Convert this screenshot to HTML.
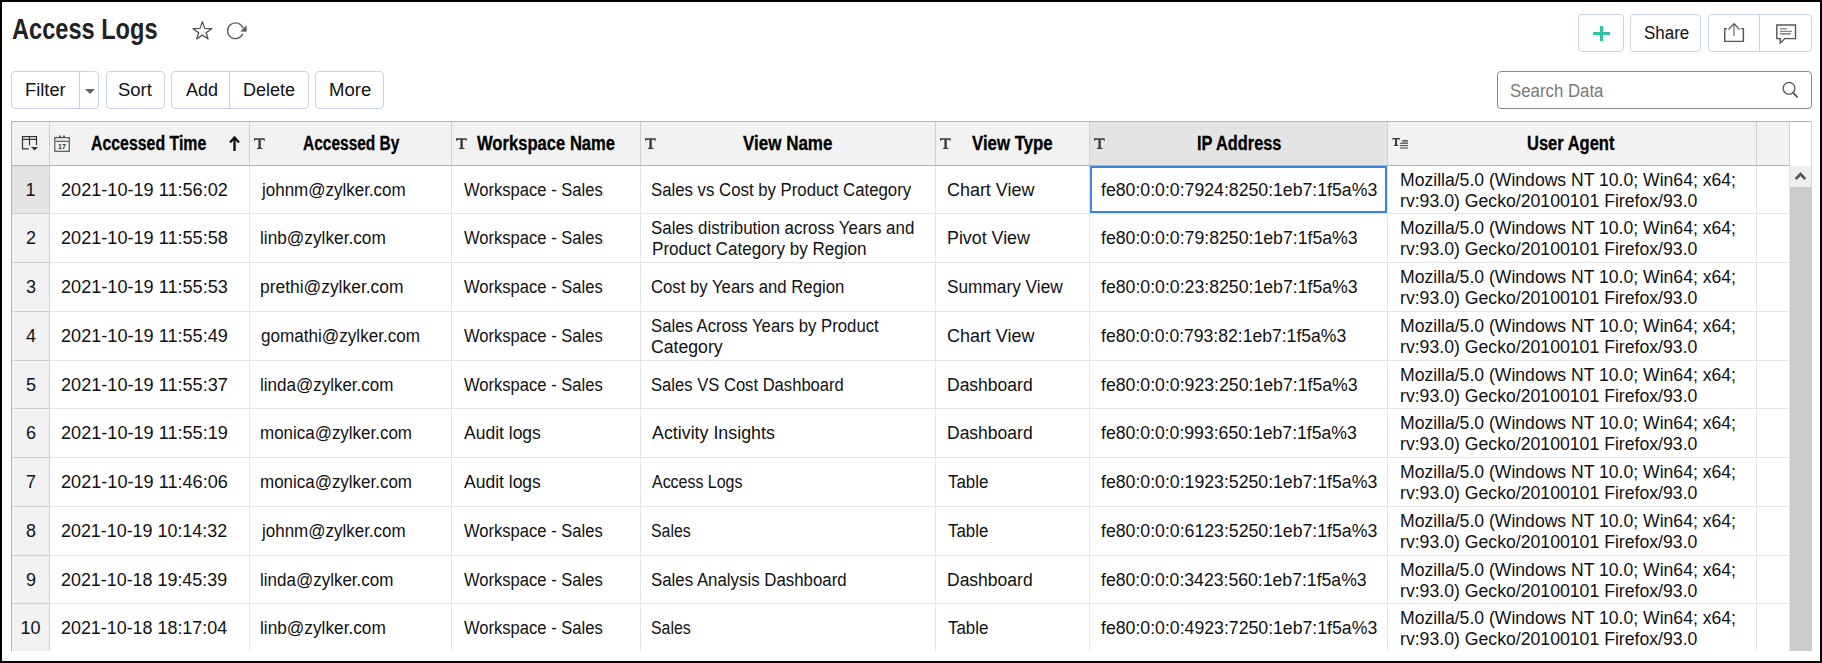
<!DOCTYPE html>
<html><head><meta charset="utf-8"><style>
*{margin:0;padding:0;box-sizing:border-box}
html,body{width:1822px;height:663px;overflow:hidden;background:#fff}
body{position:relative;font-family:"Liberation Sans",sans-serif;color:#111}
.t{position:absolute;white-space:nowrap;line-height:1;transform-origin:0 0}
.r{position:absolute}
.frame{position:absolute;left:0;top:0;width:1822px;height:663px;border:2px solid #000;z-index:50}
.btn{position:absolute;border:1px solid #c8d2ea;border-radius:4px;background:#fff}
</style></head><body>
<div id="t0" class="t" style="left:11.78px;top:13.80px;font-size:30px;transform:scaleX(0.7864);font-weight:700;color:#222;">Access Logs</div>
<svg class="r" style="left:185px;top:14px" width="36" height="32" viewBox="185 14 36 32">
<path d="M202.4 21.7 L204.7 28.4 L211.8 28.6 L206.1 32.7 L208.1 39 L202.4 35.1 L196.7 39 L198.7 32.7 L193 28.6 L200.1 28.4 Z" fill="none" stroke="#555" stroke-width="1.3" stroke-linejoin="round"/>
</svg>
<svg class="r" style="left:222px;top:14px" width="30" height="32" viewBox="222 14 30 32">
<path d="M242.8 33.85 A7.9 7.9 0 1 1 243 28.2" fill="none" stroke="#555" stroke-width="1.3"/>
<path d="M240.3 31.6 L246.6 25.4 L246.6 31.8 Z" fill="#555"/>
</svg>
<div class="btn" style="left:1578px;top:14px;width:46px;height:38px"></div>
<div class="r" style="left:1593px;top:32px;width:17px;height:3px;background:#2cc4a5"></div>
<div class="r" style="left:1600px;top:26px;width:3px;height:15px;background:#2cc4a5"></div>
<div class="btn" style="left:1630px;top:14px;width:71px;height:38px"></div>
<div id="t1" class="t" style="left:1643.63px;top:23.76px;font-size:18px;transform:scaleX(0.9410);">Share</div>
<div class="btn" style="left:1708px;top:14px;width:104px;height:38px"></div>
<div class="r" style="left:1759px;top:15px;width:1px;height:36px;background:#c8d2ea"></div>
<svg class="r" style="left:1715px;top:18px" width="90" height="30" viewBox="1715 18 90 30">
<path d="M1727 28.6 H1724.8 V41.4 H1743.4 V28.6 H1741.1" fill="none" stroke="#555" stroke-width="1.4"/>
<path d="M1734 36 V24" fill="none" stroke="#777" stroke-width="1.3"/>
<path d="M1728.4 29.6 L1734 23.7 L1739.6 29.6" fill="none" stroke="#555" stroke-width="1.3"/>
<path d="M1776.8 25 H1795.5 V38.6 H1784.8 L1780.3 43 V38.6 H1776.8 Z" fill="none" stroke="#555" stroke-width="1.4" stroke-linejoin="miter"/>
<path d="M1780 28.8 H1787 M1780 31.3 H1792 M1780 33.9 H1791" fill="none" stroke="#666" stroke-width="1.1"/>
</svg>
<div class="btn" style="left:11px;top:71px;width:88px;height:38px"></div>
<div class="r" style="left:79px;top:72px;width:1px;height:36px;background:#c8d2ea"></div>
<div id="t2" class="t" style="left:25.01px;top:81.16px;font-size:18px;transform:scaleX(1.0160);">Filter</div>
<svg class="r" style="left:84px;top:88px" width="12" height="7" viewBox="84 88 12 7"><path d="M85 89 H95 L90 94 Z" fill="#666"/></svg>
<div class="btn" style="left:106px;top:71px;width:59px;height:38px"></div>
<div id="t3" class="t" style="left:117.72px;top:81.16px;font-size:18px;transform:scaleX(1.0259);">Sort</div>
<div class="btn" style="left:171px;top:71px;width:138px;height:38px"></div>
<div class="r" style="left:229px;top:72px;width:1px;height:36px;background:#c8d2ea"></div>
<div id="t4" class="t" style="left:185.50px;top:81.16px;font-size:18px;transform:scaleX(1.0010);">Add</div>
<div id="t5" class="t" style="left:243.00px;top:81.16px;font-size:18px;">Delete</div>
<div class="btn" style="left:315px;top:71px;width:69px;height:38px"></div>
<div id="t6" class="t" style="left:328.50px;top:81.16px;font-size:18px;transform:scaleX(1.0303);">More</div>
<div class="r" style="left:1497px;top:71px;width:315px;height:38px;border:1px solid #8a8a8a;border-radius:4px"></div>
<div id="t7" class="t" style="left:1510.00px;top:82.16px;font-size:18px;transform:scaleX(0.9334);color:#7a7a7a;">Search Data</div>
<svg class="r" style="left:1778px;top:78px" width="24" height="24" viewBox="1778 78 24 24">
<circle cx="1789" cy="88.3" r="5.9" fill="none" stroke="#555" stroke-width="1.3"/>
<path d="M1793.3 92.8 L1797.6 97.3" stroke="#555" stroke-width="1.8"/>
</svg>
<div class="r" style="left:11px;top:121px;width:1779px;height:45px;background:#f2f2f2"></div>
<div class="r" style="left:1090px;top:122px;width:297px;height:43px;background:#e4e4e4"></div>
<div class="r" style="left:11px;top:166px;width:38px;height:485px;background:#f2f2f2"></div>
<div class="r" style="left:12px;top:166px;width:37px;height:47px;background:#e4e4e4"></div>
<div class="r" style="left:11px;top:121px;width:1801px;height:1px;background:#b4b4b4"></div>
<div class="r" style="left:11px;top:121px;width:1px;height:530px;background:#b4b4b4"></div>
<div class="r" style="left:11px;top:165px;width:1779px;height:1px;background:#b4b4b4"></div>
<div class="r" style="left:1811px;top:121px;width:1px;height:66px;background:#d8d8d8"></div>
<div class="r" style="left:49px;top:122px;width:1px;height:43px;background:#d0d0d0"></div>
<div class="r" style="left:249px;top:122px;width:1px;height:43px;background:#d0d0d0"></div>
<div class="r" style="left:451px;top:122px;width:1px;height:43px;background:#d0d0d0"></div>
<div class="r" style="left:640px;top:122px;width:1px;height:43px;background:#d0d0d0"></div>
<div class="r" style="left:935px;top:122px;width:1px;height:43px;background:#d0d0d0"></div>
<div class="r" style="left:1089px;top:122px;width:1px;height:43px;background:#d0d0d0"></div>
<div class="r" style="left:1387px;top:122px;width:1px;height:43px;background:#d0d0d0"></div>
<div class="r" style="left:1756px;top:122px;width:1px;height:43px;background:#d0d0d0"></div>
<div class="r" style="left:1789px;top:122px;width:1px;height:43px;background:#d0d0d0"></div>
<div class="r" style="left:49px;top:166px;width:1px;height:485px;background:#cfcfcf"></div>
<div class="r" style="left:249px;top:166px;width:1px;height:485px;background:#e5e5e5"></div>
<div class="r" style="left:451px;top:166px;width:1px;height:485px;background:#e5e5e5"></div>
<div class="r" style="left:640px;top:166px;width:1px;height:485px;background:#e5e5e5"></div>
<div class="r" style="left:935px;top:166px;width:1px;height:485px;background:#e5e5e5"></div>
<div class="r" style="left:1089px;top:166px;width:1px;height:485px;background:#e5e5e5"></div>
<div class="r" style="left:1387px;top:166px;width:1px;height:485px;background:#e5e5e5"></div>
<div class="r" style="left:1756px;top:166px;width:1px;height:485px;background:#e5e5e5"></div>
<div class="r" style="left:1789px;top:166px;width:1px;height:485px;background:#e5e5e5"></div>
<div class="r" style="left:12px;top:213px;width:37px;height:1px;background:#cfcfcf"></div>
<div class="r" style="left:50px;top:213px;width:1739px;height:1px;background:#e5e5e5"></div>
<div class="r" style="left:12px;top:262px;width:37px;height:1px;background:#cfcfcf"></div>
<div class="r" style="left:50px;top:262px;width:1739px;height:1px;background:#e5e5e5"></div>
<div class="r" style="left:12px;top:311px;width:37px;height:1px;background:#cfcfcf"></div>
<div class="r" style="left:50px;top:311px;width:1739px;height:1px;background:#e5e5e5"></div>
<div class="r" style="left:12px;top:360px;width:37px;height:1px;background:#cfcfcf"></div>
<div class="r" style="left:50px;top:360px;width:1739px;height:1px;background:#e5e5e5"></div>
<div class="r" style="left:12px;top:408px;width:37px;height:1px;background:#cfcfcf"></div>
<div class="r" style="left:50px;top:408px;width:1739px;height:1px;background:#e5e5e5"></div>
<div class="r" style="left:12px;top:457px;width:37px;height:1px;background:#cfcfcf"></div>
<div class="r" style="left:50px;top:457px;width:1739px;height:1px;background:#e5e5e5"></div>
<div class="r" style="left:12px;top:506px;width:37px;height:1px;background:#cfcfcf"></div>
<div class="r" style="left:50px;top:506px;width:1739px;height:1px;background:#e5e5e5"></div>
<div class="r" style="left:12px;top:555px;width:37px;height:1px;background:#cfcfcf"></div>
<div class="r" style="left:50px;top:555px;width:1739px;height:1px;background:#e5e5e5"></div>
<div class="r" style="left:12px;top:603px;width:37px;height:1px;background:#cfcfcf"></div>
<div class="r" style="left:50px;top:603px;width:1739px;height:1px;background:#e5e5e5"></div>
<div class="r" style="left:1790px;top:166px;width:21px;height:21px;background:#efefef"></div>
<svg class="r" style="left:1790px;top:166px" width="21" height="21" viewBox="1790 166 21 21"><path d="M1795.8 179 L1800.5 174 L1805.2 179" fill="none" stroke="#555" stroke-width="2.6"/></svg>
<div class="r" style="left:1790px;top:187px;width:22px;height:464px;background:#cbcbcb"></div>
<div class="r" style="left:1090px;top:166px;width:297px;height:47px;border:2px solid #3a84e2;z-index:5"></div>
<svg class="r" style="left:18px;top:132px" width="24" height="22" viewBox="18 132 24 22">
<rect x="22.5" y="136.5" width="14" height="3" fill="#c9c9c9"/>
<path d="M28.8 148.8 H22.5 V136.5 H36.5 V145.2 M22.5 139.5 H36.5 M29.5 136.5 V145.2" fill="none" stroke="#333" stroke-width="1.2"/>
<path d="M31 147 H38 L34.5 150.5 Z" fill="#333"/>
</svg>
<svg class="r" style="left:52px;top:132px" width="22" height="22" viewBox="52 132 22 22">
<rect x="54.8" y="137.6" width="14.5" height="13.7" fill="none" stroke="#555" stroke-width="1.2"/>
<path d="M55.5 141.3 H68.6" stroke="#555" stroke-width="1.2"/>
<path d="M60 135.6 V137.6 M64 135.6 V137.6" stroke="#555" stroke-width="1.9"/>
<text x="61.9" y="149" font-family="Liberation Sans" font-weight="700" font-size="7" fill="#333" text-anchor="middle">17</text>
</svg>
<svg class="r" style="left:253.2px;top:136px" width="14" height="15" viewBox="253.2 136 14 15"><path fill="#3a3a3a" d="M254.2 138.2 H264.9 V141 L264.4 141 Q264.0 139.9 262.8 139.8 H261.0 V147.8 L262.7 148 V149 H257.09999999999997 V148 L258.59999999999997 147.8 V139.8 H256.3 Q255.1 139.9 254.7 141 L254.2 141 Z"/></svg>
<svg class="r" style="left:455.3px;top:136px" width="14" height="15" viewBox="455.3 136 14 15"><path fill="#3a3a3a" d="M456.3 138.2 H467.0 V141 L466.5 141 Q466.1 139.9 464.90000000000003 139.8 H463.1 V147.8 L464.8 148 V149 H459.2 V148 L460.7 147.8 V139.8 H458.40000000000003 Q457.2 139.9 456.8 141 L456.3 141 Z"/></svg>
<svg class="r" style="left:644.3px;top:136px" width="14" height="15" viewBox="644.3 136 14 15"><path fill="#3a3a3a" d="M645.3 138.2 H656.0 V141 L655.5 141 Q655.0999999999999 139.9 653.9 139.8 H652.0999999999999 V147.8 L653.8 148 V149 H648.1999999999999 V148 L649.6999999999999 147.8 V139.8 H647.4 Q646.1999999999999 139.9 645.8 141 L645.3 141 Z"/></svg>
<svg class="r" style="left:939.3px;top:136px" width="14" height="15" viewBox="939.3 136 14 15"><path fill="#3a3a3a" d="M940.3 138.2 H951.0 V141 L950.5 141 Q950.0999999999999 139.9 948.9 139.8 H947.0999999999999 V147.8 L948.8 148 V149 H943.1999999999999 V148 L944.6999999999999 147.8 V139.8 H942.4 Q941.1999999999999 139.9 940.8 141 L940.3 141 Z"/></svg>
<svg class="r" style="left:1093.3px;top:136px" width="14" height="15" viewBox="1093.3 136 14 15"><path fill="#3a3a3a" d="M1094.3 138.2 H1105.0 V141 L1104.5 141 Q1104.1 139.9 1102.8999999999999 139.8 H1101.1 V147.8 L1102.8 148 V149 H1097.2 V148 L1098.7 147.8 V139.8 H1096.3999999999999 Q1095.2 139.9 1094.8 141 L1094.3 141 Z"/></svg>
<svg class="r" style="left:1390px;top:136px" width="20" height="15" viewBox="1390 136 20 15"><path fill="#3a3a3a" d="M1392.5 138 H1399.8 V140 L1399.4 140 Q1399 139.3 1398.2 139.3 H1397.1 V144.8 L1398.1 145 V145.9 H1393.9 V145 L1395 144.8 V139.3 H1393.9 Q1393.1 139.3 1392.9 140 L1392.5 140 Z"/><rect x="1402" y="141" width="6" height="2" fill="#aaa"/><path d="M1402.3 140.6 H1407.9 M1399.8 143.3 H1407.9 M1399.8 145.6 H1407.9" stroke="#444" stroke-width="1"/><path d="M1399.8 148 H1407.9" stroke="#777" stroke-width="1.5"/></svg>
<div id="t8" class="t" style="left:91.28px;top:133.07px;font-size:20px;transform:scaleX(0.7932);font-weight:700;color:#000;-webkit-text-stroke:0.3px #000;">Accessed Time</div>
<div id="t9" class="t" style="left:302.61px;top:133.07px;font-size:20px;transform:scaleX(0.7743);font-weight:700;color:#000;-webkit-text-stroke:0.3px #000;">Accessed By</div>
<div id="t10" class="t" style="left:477.46px;top:133.07px;font-size:20px;transform:scaleX(0.8300);font-weight:700;color:#000;-webkit-text-stroke:0.3px #000;">Workspace Name</div>
<div id="t11" class="t" style="left:743.28px;top:133.07px;font-size:20px;transform:scaleX(0.8496);font-weight:700;color:#000;-webkit-text-stroke:0.3px #000;">View Name</div>
<div id="t12" class="t" style="left:971.72px;top:133.07px;font-size:20px;transform:scaleX(0.8397);font-weight:700;color:#000;-webkit-text-stroke:0.3px #000;">View Type</div>
<div id="t13" class="t" style="left:1196.83px;top:133.07px;font-size:20px;transform:scaleX(0.8160);font-weight:700;color:#000;-webkit-text-stroke:0.3px #000;">IP Address</div>
<div id="t14" class="t" style="left:1527.34px;top:133.07px;font-size:20px;transform:scaleX(0.8249);font-weight:700;color:#000;-webkit-text-stroke:0.3px #000;">User Agent</div>
<svg class="r" style="left:226px;top:134px" width="16" height="20" viewBox="226 134 16 20"><path d="M234.5 151 V138" stroke="#111" stroke-width="2.4"/><path d="M230 142.5 L234.5 137.5 L239 142.5" fill="none" stroke="#111" stroke-width="2.2"/></svg>
<div id="t15" class="t" style="left:25.50px;top:181.16px;font-size:18px;">1</div>
<div id="t16" class="t" style="left:61.12px;top:181.16px;font-size:18px;transform:scaleX(1.0061);">2021-10-19 11:56:02</div>
<div id="t17" class="t" style="left:262.09px;top:181.16px;font-size:18px;transform:scaleX(0.9434);">johnm@zylker.com</div>
<div id="t18" class="t" style="left:464.14px;top:181.16px;font-size:18px;transform:scaleX(0.9200);">Workspace - Sales</div>
<div id="t19" class="t" style="left:651.38px;top:181.16px;font-size:18px;transform:scaleX(0.9319);">Sales vs Cost by Product Category</div>
<div id="t20" class="t" style="left:947.13px;top:181.16px;font-size:18px;transform:scaleX(0.9957);">Chart View</div>
<div id="t21" class="t" style="left:1100.75px;top:181.16px;font-size:18px;transform:scaleX(0.9822);">fe80:0:0:0:7924:8250:1eb7:1f5a%3</div>
<div id="t22" class="t" style="left:1399.57px;top:170.96px;font-size:18px;transform:scaleX(0.9771);">Mozilla/5.0 (Windows NT 10.0; Win64; x64;</div>
<div id="t23" class="t" style="left:1399.54px;top:191.56px;font-size:18px;transform:scaleX(0.9808);">rv:93.0) Gecko/20100101 Firefox/93.0</div>
<div id="t24" class="t" style="left:26.00px;top:229.16px;font-size:18px;">2</div>
<div id="t25" class="t" style="left:61.12px;top:229.16px;font-size:18px;transform:scaleX(1.0061);">2021-10-19 11:55:58</div>
<div id="t26" class="t" style="left:260.17px;top:229.16px;font-size:18px;transform:scaleX(0.9582);">linb@zylker.com</div>
<div id="t27" class="t" style="left:464.14px;top:229.16px;font-size:18px;transform:scaleX(0.9200);">Workspace - Sales</div>
<div id="t28" class="t" style="left:651.38px;top:218.96px;font-size:18px;transform:scaleX(0.9398);">Sales distribution across Years and</div>
<div id="t29" class="t" style="left:652.00px;top:239.56px;font-size:18px;transform:scaleX(0.9491);">Product Category by Region</div>
<div id="t30" class="t" style="left:947.18px;top:229.16px;font-size:18px;transform:scaleX(0.9904);">Pivot View</div>
<div id="t31" class="t" style="left:1100.70px;top:229.16px;font-size:18px;transform:scaleX(0.9824);">fe80:0:0:0:79:8250:1eb7:1f5a%3</div>
<div id="t32" class="t" style="left:1399.57px;top:218.96px;font-size:18px;transform:scaleX(0.9771);">Mozilla/5.0 (Windows NT 10.0; Win64; x64;</div>
<div id="t33" class="t" style="left:1399.54px;top:239.56px;font-size:18px;transform:scaleX(0.9808);">rv:93.0) Gecko/20100101 Firefox/93.0</div>
<div id="t34" class="t" style="left:26.00px;top:278.16px;font-size:18px;">3</div>
<div id="t35" class="t" style="left:61.12px;top:278.16px;font-size:18px;transform:scaleX(1.0061);">2021-10-19 11:55:53</div>
<div id="t36" class="t" style="left:260.17px;top:278.16px;font-size:18px;transform:scaleX(0.9671);">prethi@zylker.com</div>
<div id="t37" class="t" style="left:464.14px;top:278.16px;font-size:18px;transform:scaleX(0.9200);">Workspace - Sales</div>
<div id="t38" class="t" style="left:651.38px;top:278.16px;font-size:18px;transform:scaleX(0.9285);">Cost by Years and Region</div>
<div id="t39" class="t" style="left:947.20px;top:278.16px;font-size:18px;transform:scaleX(0.9584);">Summary View</div>
<div id="t40" class="t" style="left:1100.70px;top:278.16px;font-size:18px;transform:scaleX(0.9824);">fe80:0:0:0:23:8250:1eb7:1f5a%3</div>
<div id="t41" class="t" style="left:1399.57px;top:267.96px;font-size:18px;transform:scaleX(0.9771);">Mozilla/5.0 (Windows NT 10.0; Win64; x64;</div>
<div id="t42" class="t" style="left:1399.54px;top:288.56px;font-size:18px;transform:scaleX(0.9808);">rv:93.0) Gecko/20100101 Firefox/93.0</div>
<div id="t43" class="t" style="left:26.00px;top:327.16px;font-size:18px;">4</div>
<div id="t44" class="t" style="left:61.12px;top:327.16px;font-size:18px;transform:scaleX(1.0061);">2021-10-19 11:55:49</div>
<div id="t45" class="t" style="left:261.00px;top:327.16px;font-size:18px;transform:scaleX(0.9504);">gomathi@zylker.com</div>
<div id="t46" class="t" style="left:464.14px;top:327.16px;font-size:18px;transform:scaleX(0.9200);">Workspace - Sales</div>
<div id="t47" class="t" style="left:651.38px;top:316.96px;font-size:18px;transform:scaleX(0.9290);">Sales Across Years by Product</div>
<div id="t48" class="t" style="left:651.36px;top:337.56px;font-size:18px;transform:scaleX(0.9811);">Category</div>
<div id="t49" class="t" style="left:947.13px;top:327.16px;font-size:18px;transform:scaleX(0.9957);">Chart View</div>
<div id="t50" class="t" style="left:1100.75px;top:327.16px;font-size:18px;transform:scaleX(0.9761);">fe80:0:0:0:793:82:1eb7:1f5a%3</div>
<div id="t51" class="t" style="left:1399.57px;top:316.96px;font-size:18px;transform:scaleX(0.9771);">Mozilla/5.0 (Windows NT 10.0; Win64; x64;</div>
<div id="t52" class="t" style="left:1399.54px;top:337.56px;font-size:18px;transform:scaleX(0.9808);">rv:93.0) Gecko/20100101 Firefox/93.0</div>
<div id="t53" class="t" style="left:26.00px;top:376.16px;font-size:18px;">5</div>
<div id="t54" class="t" style="left:61.12px;top:376.16px;font-size:18px;transform:scaleX(1.0061);">2021-10-19 11:55:37</div>
<div id="t55" class="t" style="left:260.18px;top:376.16px;font-size:18px;transform:scaleX(0.9439);">linda@zylker.com</div>
<div id="t56" class="t" style="left:464.14px;top:376.16px;font-size:18px;transform:scaleX(0.9200);">Workspace - Sales</div>
<div id="t57" class="t" style="left:651.38px;top:376.16px;font-size:18px;transform:scaleX(0.9222);">Sales VS Cost Dashboard</div>
<div id="t58" class="t" style="left:947.18px;top:376.16px;font-size:18px;transform:scaleX(0.9722);">Dashboard</div>
<div id="t59" class="t" style="left:1100.70px;top:376.16px;font-size:18px;transform:scaleX(0.9824);">fe80:0:0:0:923:250:1eb7:1f5a%3</div>
<div id="t60" class="t" style="left:1399.57px;top:365.96px;font-size:18px;transform:scaleX(0.9771);">Mozilla/5.0 (Windows NT 10.0; Win64; x64;</div>
<div id="t61" class="t" style="left:1399.54px;top:386.56px;font-size:18px;transform:scaleX(0.9808);">rv:93.0) Gecko/20100101 Firefox/93.0</div>
<div id="t62" class="t" style="left:26.00px;top:424.16px;font-size:18px;">6</div>
<div id="t63" class="t" style="left:61.12px;top:424.16px;font-size:18px;transform:scaleX(1.0061);">2021-10-19 11:55:19</div>
<div id="t64" class="t" style="left:260.21px;top:424.16px;font-size:18px;transform:scaleX(0.9422);">monica@zylker.com</div>
<div id="t65" class="t" style="left:463.56px;top:424.16px;font-size:18px;transform:scaleX(0.9722);">Audit logs</div>
<div id="t66" class="t" style="left:652.35px;top:424.16px;font-size:18px;transform:scaleX(0.9904);">Activity Insights</div>
<div id="t67" class="t" style="left:947.18px;top:424.16px;font-size:18px;transform:scaleX(0.9722);">Dashboard</div>
<div id="t68" class="t" style="left:1100.75px;top:424.16px;font-size:18px;transform:scaleX(0.9793);">fe80:0:0:0:993:650:1eb7:1f5a%3</div>
<div id="t69" class="t" style="left:1399.57px;top:413.96px;font-size:18px;transform:scaleX(0.9771);">Mozilla/5.0 (Windows NT 10.0; Win64; x64;</div>
<div id="t70" class="t" style="left:1399.54px;top:434.56px;font-size:18px;transform:scaleX(0.9808);">rv:93.0) Gecko/20100101 Firefox/93.0</div>
<div id="t71" class="t" style="left:26.00px;top:473.16px;font-size:18px;">7</div>
<div id="t72" class="t" style="left:61.12px;top:473.16px;font-size:18px;transform:scaleX(1.0061);">2021-10-19 11:46:06</div>
<div id="t73" class="t" style="left:260.21px;top:473.16px;font-size:18px;transform:scaleX(0.9422);">monica@zylker.com</div>
<div id="t74" class="t" style="left:463.56px;top:473.16px;font-size:18px;transform:scaleX(0.9722);">Audit logs</div>
<div id="t75" class="t" style="left:652.29px;top:473.16px;font-size:18px;transform:scaleX(0.8864);">Access Logs</div>
<div id="t76" class="t" style="left:948.14px;top:473.16px;font-size:18px;transform:scaleX(0.9384);">Table</div>
<div id="t77" class="t" style="left:1100.75px;top:473.16px;font-size:18px;transform:scaleX(0.9822);">fe80:0:0:0:1923:5250:1eb7:1f5a%3</div>
<div id="t78" class="t" style="left:1399.57px;top:462.96px;font-size:18px;transform:scaleX(0.9771);">Mozilla/5.0 (Windows NT 10.0; Win64; x64;</div>
<div id="t79" class="t" style="left:1399.54px;top:483.56px;font-size:18px;transform:scaleX(0.9808);">rv:93.0) Gecko/20100101 Firefox/93.0</div>
<div id="t80" class="t" style="left:26.00px;top:522.16px;font-size:18px;">8</div>
<div id="t81" class="t" style="left:61.15px;top:522.16px;font-size:18px;transform:scaleX(0.9940);">2021-10-19 10:14:32</div>
<div id="t82" class="t" style="left:262.09px;top:522.16px;font-size:18px;transform:scaleX(0.9434);">johnm@zylker.com</div>
<div id="t83" class="t" style="left:464.14px;top:522.16px;font-size:18px;transform:scaleX(0.9200);">Workspace - Sales</div>
<div id="t84" class="t" style="left:651.41px;top:522.16px;font-size:18px;transform:scaleX(0.8823);">Sales</div>
<div id="t85" class="t" style="left:948.14px;top:522.16px;font-size:18px;transform:scaleX(0.9384);">Table</div>
<div id="t86" class="t" style="left:1100.75px;top:522.16px;font-size:18px;transform:scaleX(0.9822);">fe80:0:0:0:6123:5250:1eb7:1f5a%3</div>
<div id="t87" class="t" style="left:1399.57px;top:511.96px;font-size:18px;transform:scaleX(0.9771);">Mozilla/5.0 (Windows NT 10.0; Win64; x64;</div>
<div id="t88" class="t" style="left:1399.54px;top:532.56px;font-size:18px;transform:scaleX(0.9808);">rv:93.0) Gecko/20100101 Firefox/93.0</div>
<div id="t89" class="t" style="left:26.00px;top:571.16px;font-size:18px;">9</div>
<div id="t90" class="t" style="left:61.15px;top:571.16px;font-size:18px;transform:scaleX(0.9940);">2021-10-18 19:45:39</div>
<div id="t91" class="t" style="left:260.18px;top:571.16px;font-size:18px;transform:scaleX(0.9439);">linda@zylker.com</div>
<div id="t92" class="t" style="left:464.14px;top:571.16px;font-size:18px;transform:scaleX(0.9200);">Workspace - Sales</div>
<div id="t93" class="t" style="left:651.38px;top:571.16px;font-size:18px;transform:scaleX(0.9356);">Sales Analysis Dashboard</div>
<div id="t94" class="t" style="left:947.18px;top:571.16px;font-size:18px;transform:scaleX(0.9722);">Dashboard</div>
<div id="t95" class="t" style="left:1100.75px;top:571.16px;font-size:18px;transform:scaleX(0.9793);">fe80:0:0:0:3423:560:1eb7:1f5a%3</div>
<div id="t96" class="t" style="left:1399.57px;top:560.96px;font-size:18px;transform:scaleX(0.9771);">Mozilla/5.0 (Windows NT 10.0; Win64; x64;</div>
<div id="t97" class="t" style="left:1399.54px;top:581.56px;font-size:18px;transform:scaleX(0.9808);">rv:93.0) Gecko/20100101 Firefox/93.0</div>
<div id="t98" class="t" style="left:20.50px;top:619.16px;font-size:18px;">10</div>
<div id="t99" class="t" style="left:61.15px;top:619.16px;font-size:18px;transform:scaleX(0.9940);">2021-10-18 18:17:04</div>
<div id="t100" class="t" style="left:260.17px;top:619.16px;font-size:18px;transform:scaleX(0.9582);">linb@zylker.com</div>
<div id="t101" class="t" style="left:464.14px;top:619.16px;font-size:18px;transform:scaleX(0.9200);">Workspace - Sales</div>
<div id="t102" class="t" style="left:651.41px;top:619.16px;font-size:18px;transform:scaleX(0.8823);">Sales</div>
<div id="t103" class="t" style="left:948.14px;top:619.16px;font-size:18px;transform:scaleX(0.9384);">Table</div>
<div id="t104" class="t" style="left:1100.75px;top:619.16px;font-size:18px;transform:scaleX(0.9822);">fe80:0:0:0:4923:7250:1eb7:1f5a%3</div>
<div id="t105" class="t" style="left:1399.57px;top:608.96px;font-size:18px;transform:scaleX(0.9771);">Mozilla/5.0 (Windows NT 10.0; Win64; x64;</div>
<div id="t106" class="t" style="left:1399.54px;top:629.56px;font-size:18px;transform:scaleX(0.9808);">rv:93.0) Gecko/20100101 Firefox/93.0</div>
<div class="frame"></div>
</body></html>
